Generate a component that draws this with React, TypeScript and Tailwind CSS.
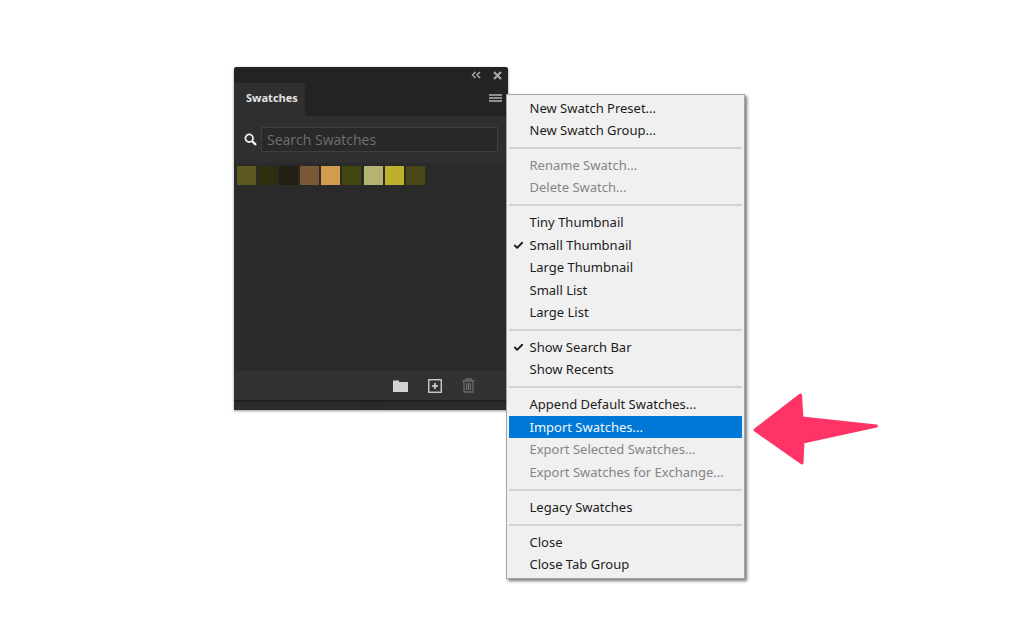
import { Check } from "lucide-react";

const swatches = [
    "bg-[#5c5a20]",
    "bg-[#2f2f10]",
    "bg-[#221f14]",
    "bg-[#7a5a34]",
    "bg-[#d39b50]",
    "bg-[#42450f]",
    "bg-[#b5b274]",
    "bg-[#bdb02a]",
    "bg-[#4b4717]",
];

type Item = { label: string; disabled?: boolean; checked?: boolean; active?: boolean };

const groups: Item[][] = [
    [{ label: "New Swatch Preset..." }, { label: "New Swatch Group..." }],
    [
        { label: "Rename Swatch...", disabled: true },
        { label: "Delete Swatch...", disabled: true },
    ],
    [
        { label: "Tiny Thumbnail" },
        { label: "Small Thumbnail", checked: true },
        { label: "Large Thumbnail" },
        { label: "Small List" },
        { label: "Large List" },
    ],
    [{ label: "Show Search Bar", checked: true }, { label: "Show Recents" }],
    [
        { label: "Append Default Swatches..." },
        { label: "Import Swatches...", active: true },
        { label: "Export Selected Swatches...", disabled: true },
        { label: "Export Swatches for Exchange...", disabled: true },
    ],
    [{ label: "Legacy Swatches" }],
    [{ label: "Close" }, { label: "Close Tab Group" }],
];

function MenuRow({ item }: { item: Item }) {
    const color = item.active ? "bg-[#0078d7] text-[#f2f7fc]" : item.disabled ? "text-[#858585]" : "text-[#1c1c1c]";
    return (
        <div className={`h-[22.4px] flex items-center pl-[20.5px] relative text-[13px] leading-none ${color}`}>
            {item.checked && <Check size={11} strokeWidth={4} className="absolute left-[4px] top-[6px] text-[#1c1c1c]" />}
            {item.label}
        </div>
    );
}

function SwatchesPanel() {
    return (
        <div className="absolute left-[234px] top-[67px] w-[274px] h-[343px] flex flex-col bg-[#2c2c2c] rounded-t-[3px] shadow-[0_1px_3px_rgba(0,0,0,0.4)] overflow-hidden">
            {/* title strip */}
            <div className="h-[16px] flex items-center justify-end gap-[12px] pr-[6px] bg-[#232323]">
                <svg width="10" height="8" viewBox="0 0 10 8" fill="none" stroke="#a8a8a8" strokeWidth="1.5">
                    <path d="M4.500 1 1.500 4l3 3M9 1 6 4l3 3" />
                </svg>
                <svg width="9" height="9" viewBox="0 0 9 9" fill="none" stroke="#a8a8a8" strokeWidth="2.2">
                    <path d="M1 1l7 7M8 1 1 8" />
                </svg>
            </div>
            {/* tabs */}
            <div className="h-[33px] flex items-stretch justify-between bg-[#232323]">
                <div className="w-[71px] flex items-center pl-[12px] pb-[3px] bg-[#2f2f2f] text-[#e4e4e4] text-[11px] font-bold font-['Open_Sans',sans-serif]">
                    Swatches
                </div>
                <div className="flex flex-col justify-center gap-[1.500px] pr-[6px] pb-[3px]">
                    <div className="w-[13px] h-[1.500px] bg-[#8f8f8f]" />
                    <div className="w-[13px] h-[1.500px] bg-[#8f8f8f]" />
                    <div className="w-[13px] h-[1.500px] bg-[#8f8f8f]" />
                </div>
            </div>
            {/* search */}
            <div className="h-[47px] flex items-center bg-[#2f2f2f] pl-[10px] pr-[10px] gap-[4px]">
                <svg width="13" height="13" viewBox="0 0 13 13" fill="none" stroke="#f0f0f0" className="shrink-0">
                    <circle cx="5.200" cy="5.200" r="3.800" strokeWidth="1.800" />
                    <path d="M8 8l4 4" strokeWidth="2.400" />
                </svg>
                <div className="flex-1 h-[25px] flex items-center pl-[5px] bg-[#292929] border border-[#3f3f3f] text-[#6f6f6f] text-[14px] font-['Open_Sans',sans-serif]">
                    Search Swatches
                </div>
            </div>
            {/* swatch grid */}
            <div className="flex-1 flex items-start gap-[2.100px] pl-[3px] pt-[3px] bg-[#2a2a2a]">
                {swatches.map((c) => (
                    <div key={c} className={`w-[19px] h-[19px] ${c}`} />
                ))}
            </div>
            {/* footer */}
            <div className="h-[30px] flex items-center justify-end gap-[20px] pr-[33px] bg-[#323232] border-t border-[#2a2a2a]">
                <svg width="15" height="12" viewBox="0 0 15 12" fill="#d2d2d2">
                    <path d="M0 0.500h6V2h9v10H0z" />
                </svg>
                <svg width="14" height="14" viewBox="0 0 14 14" fill="none" stroke="#d8d8d8">
                    <rect x="0.750" y="0.750" width="12.500" height="12.500" strokeWidth="1.300" />
                    <path d="M7 4v6M4 7h6" strokeWidth="1.600" />
                </svg>
                <svg width="13" height="15" viewBox="0 0 13 15" fill="none" stroke="#6b6b6b" strokeWidth="1.300">
                    <path d="M0.500 3h12M4 3V1h5v2M2 3v11h9V3M4.600 5v7M6.500 5v7M8.400 5v7" />
                </svg>
            </div>
            {/* bottom edge */}
            <div className="h-[10px] flex justify-center bg-[#2b2b2b] border-t-2 border-[#1f1f1f]">
                <div className="w-[24px] h-[8px] bg-[#282828]" />
            </div>
        </div>
    );
}

function FlyoutMenu() {
    return (
        <div className="absolute left-[506px] top-[94px] w-[239px] py-[2px] bg-[#f0f0f0] border border-[#a6a6a6] shadow-[2px_2px_3px_rgba(0,0,0,0.55)] font-['Noto_Sans','Open_Sans',sans-serif]">
            {groups.map((group, i) => (
                <div key={i} className="px-[2px]">
                    {i > 0 && (
                        <div className="h-[12.600px] flex items-center">
                            <div className="w-full h-[2px] bg-[#d2d2d2]" />
                        </div>
                    )}
                    {group.map((item) => (
                        <MenuRow key={item.label} item={item} />
                    ))}
                </div>
            ))}
        </div>
    );
}

export default function App() {
    return (
        <div className="relative w-[1024px] h-[623px] bg-white overflow-hidden">
            <SwatchesPanel />
            <FlyoutMenu />
            {/* pointer arrow */}
            <svg className="absolute left-[750px] top-[390px]" width="132" height="78" viewBox="0 0 132 78">
                <path
                    d="M5 40 50.500 5 52 28 126.500 36 53 52 52 73z"
                    fill="#fe3366"
                    stroke="#fe3366"
                    strokeWidth="3"
                    strokeLinejoin="round"
                />
            </svg>
        </div>
    );
}
